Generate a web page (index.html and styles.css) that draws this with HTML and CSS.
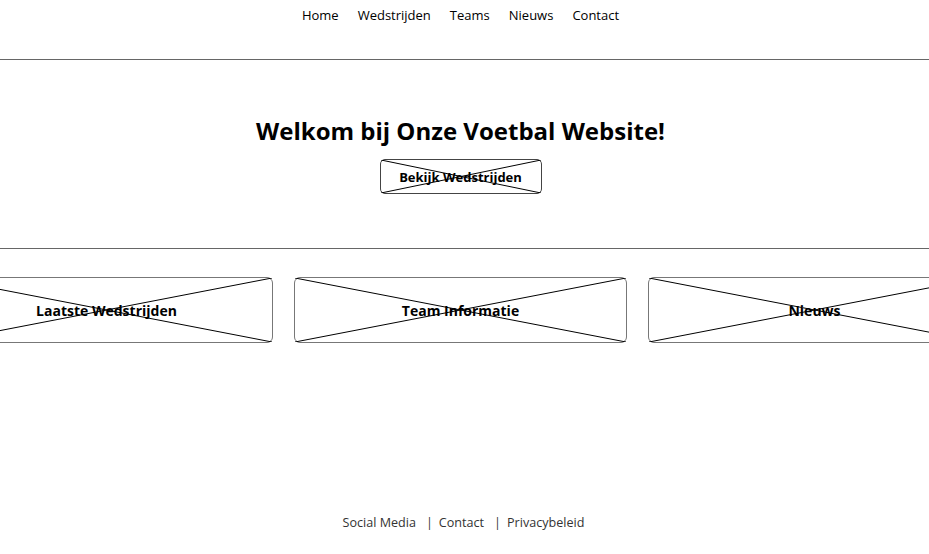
FILE: index.html
```html
<!DOCTYPE html>
<html lang="nl">
<head>
<meta charset="utf-8">
<title>Voetbal Website</title>
<link rel="stylesheet" href="styles.css">
</head>
<body>
<header class="site-header">
  <nav class="nav">
    <a href="#">Home</a>
    <a href="#">Wedstrijden</a>
    <a href="#">Teams</a>
    <a href="#">Nieuws</a>
    <a href="#">Contact</a>
  </nav>
</header>
<section class="hero">
  <h1 class="hero-title">Welkom bij Onze Voetbal Website!</h1>
  <div class="btn xbox">
    <span class="label">Bekijk Wedstrijden</span>
    <svg class="x" viewBox="0 0 100 100" preserveAspectRatio="none"><line x1="0" y1="0" x2="100" y2="100"/><line x1="0" y1="100" x2="100" y2="0"/></svg>
  </div>
</section>
<section class="cards">
  <div class="card xbox">
    <span class="label">Laatste Wedstrijden</span>
    <svg class="x" viewBox="0 0 100 100" preserveAspectRatio="none"><line x1="0" y1="0" x2="100" y2="100"/><line x1="0" y1="100" x2="100" y2="0"/></svg>
  </div>
  <div class="card xbox">
    <span class="label">Team Informatie</span>
    <svg class="x" viewBox="0 0 100 100" preserveAspectRatio="none"><line x1="0" y1="0" x2="100" y2="100"/><line x1="0" y1="100" x2="100" y2="0"/></svg>
  </div>
  <div class="card xbox">
    <span class="label">Nieuws</span>
    <svg class="x" viewBox="0 0 100 100" preserveAspectRatio="none"><line x1="0" y1="0" x2="100" y2="100"/><line x1="0" y1="100" x2="100" y2="0"/></svg>
  </div>
</section>
<footer class="footer">
  <span>Social Media</span><span class="sep">|</span><span>Contact</span><span class="sep">|</span><span>Privacybeleid</span>
</footer>
</body>
</html>
```
FILE: styles.css
```css
html, body {
  margin: 0;
  padding: 0;
}
body {
  font-family: "Open Sans", "Noto Sans", sans-serif;
  color: #000;
  background: #fff;
  min-height: 100vh;
  display: flex;
  flex-direction: column;
  overflow: hidden;
}
.site-header {
  height: 59px;
  border-bottom: 1px solid #666;
  box-sizing: content-box;
}
.nav {
  display: flex;
  justify-content: center;
  gap: 19px;
  padding: 6px 8px 0 0;
  font-size: 13px;
  line-height: 18px;
}
.nav a {
  color: #000;
  text-decoration: none;
}
.hero {
  height: 188px;
  border-bottom: 1px solid #666;
  display: flex;
  flex-direction: column;
  align-items: center;
  padding-right: 8px;
}
.hero-title {
  margin: 55px 0 12px;
  font-size: 24px;
  line-height: 32px;
  font-weight: 700;
}
.xbox {
  position: relative;
  display: flex;
  align-items: center;
  justify-content: center;
  box-sizing: border-box;
}
.xbox .x {
  position: absolute;
  inset: 0;
  width: 100%;
  height: 100%;
}
.xbox .x line {
  stroke: #000;
  stroke-width: 1;
  vector-effect: non-scaling-stroke;
}
.btn {
  width: 162px;
  height: 35px;
  border: 1px solid #444;
  border-radius: 5px;
  font-size: 13px;
  font-weight: 700;
}
.cards {
  display: flex;
  justify-content: center;
  gap: 21px;
  margin-top: 28px;
  padding-right: 8px;
}
.card {
  flex: 0 0 333px;
  height: 66px;
  border: 1px solid #777;
  border-radius: 6px;
  font-size: 14px;
  font-weight: 700;
}
.footer {
  margin-top: auto;
  padding: 0 2px 22px 0;
  display: flex;
  justify-content: center;
  font-size: 12.6px;
  line-height: 18px;
  color: #333;
}
.footer .sep {
  margin: 0 6px 0 10px;
}
```
